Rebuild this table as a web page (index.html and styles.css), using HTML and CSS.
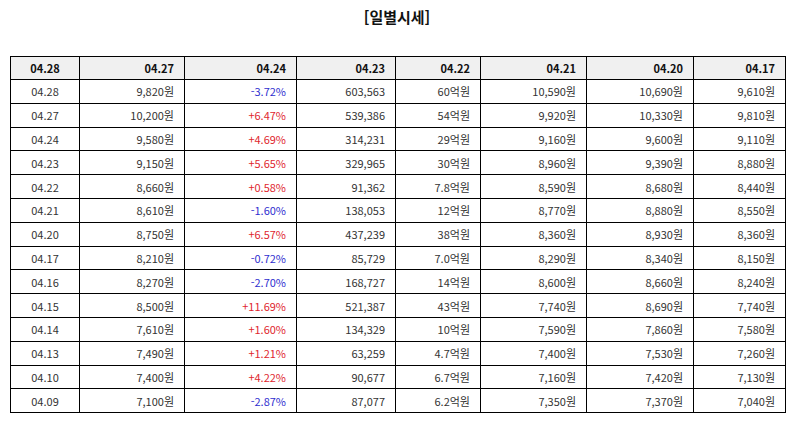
FILE: index.html
```html
<!DOCTYPE html>
<html lang="ko">
<head>
<meta charset="utf-8">
<title>일별시세</title>
<link rel="stylesheet" href="styles.css">
</head>
<body>
<h2 class="title">[일별시세]</h2>
<table class="daily">
<colgroup>
<col class="c1"><col class="c2"><col class="c3"><col class="c4"><col class="c5"><col class="c6"><col class="c7"><col class="c8">
</colgroup>
<thead>
<tr><th class="date">04.28</th><th>04.27</th><th>04.24</th><th>04.23</th><th>04.22</th><th>04.21</th><th>04.20</th><th>04.17</th></tr>
</thead>
<tbody>
<tr><td class="date">04.28</td><td>9,820원</td><td class="down">-3.72%</td><td>603,563</td><td>60억원</td><td>10,590원</td><td>10,690원</td><td>9,610원</td></tr>
<tr><td class="date">04.27</td><td>10,200원</td><td class="up">+6.47%</td><td>539,386</td><td>54억원</td><td>9,920원</td><td>10,330원</td><td>9,810원</td></tr>
<tr><td class="date">04.24</td><td>9,580원</td><td class="up">+4.69%</td><td>314,231</td><td>29억원</td><td>9,160원</td><td>9,600원</td><td>9,110원</td></tr>
<tr><td class="date">04.23</td><td>9,150원</td><td class="up">+5.65%</td><td>329,965</td><td>30억원</td><td>8,960원</td><td>9,390원</td><td>8,880원</td></tr>
<tr><td class="date">04.22</td><td>8,660원</td><td class="up">+0.58%</td><td>91,362</td><td>7.8억원</td><td>8,590원</td><td>8,680원</td><td>8,440원</td></tr>
<tr><td class="date">04.21</td><td>8,610원</td><td class="down">-1.60%</td><td>138,053</td><td>12억원</td><td>8,770원</td><td>8,880원</td><td>8,550원</td></tr>
<tr><td class="date">04.20</td><td>8,750원</td><td class="up">+6.57%</td><td>437,239</td><td>38억원</td><td>8,360원</td><td>8,930원</td><td>8,360원</td></tr>
<tr><td class="date">04.17</td><td>8,210원</td><td class="down">-0.72%</td><td>85,729</td><td>7.0억원</td><td>8,290원</td><td>8,340원</td><td>8,150원</td></tr>
<tr><td class="date">04.16</td><td>8,270원</td><td class="down">-2.70%</td><td>168,727</td><td>14억원</td><td>8,600원</td><td>8,660원</td><td>8,240원</td></tr>
<tr><td class="date">04.15</td><td>8,500원</td><td class="up">+11.69%</td><td>521,387</td><td>43억원</td><td>7,740원</td><td>8,690원</td><td>7,740원</td></tr>
<tr><td class="date">04.14</td><td>7,610원</td><td class="up">+1.60%</td><td>134,329</td><td>10억원</td><td>7,590원</td><td>7,860원</td><td>7,580원</td></tr>
<tr><td class="date">04.13</td><td>7,490원</td><td class="up">+1.21%</td><td>63,259</td><td>4.7억원</td><td>7,400원</td><td>7,530원</td><td>7,260원</td></tr>
<tr><td class="date">04.10</td><td>7,400원</td><td class="up">+4.22%</td><td>90,677</td><td>6.7억원</td><td>7,160원</td><td>7,420원</td><td>7,130원</td></tr>
<tr><td class="date">04.09</td><td>7,100원</td><td class="down">-2.87%</td><td>87,077</td><td>6.2억원</td><td>7,350원</td><td>7,370원</td><td>7,040원</td></tr>
</tbody>
</table>
</body>
</html>
```
FILE: styles.css
```css
html, body {
  margin: 0;
  padding: 0;
  background: #fff;
}
body {
  font-family: "Noto Sans CJK KR", "Noto Sans", sans-serif;
  color: #333;
}
.title {
  margin: 0;
  padding-top: 7px;
  height: 56px;
  box-sizing: border-box;
  text-align: center;
  font-size: 15px;
  line-height: 20px;
  font-weight: bold;
  color: #111;
}
.daily {
  margin-left: 10px;
  width: 776px;
  border-collapse: collapse;
  table-layout: fixed;
  font-size: 11px;
}
.c1 { width: 69px; }
.c2 { width: 105px; }
.c3 { width: 112px; }
.c4 { width: 99px; }
.c5 { width: 85px; }
.c6 { width: 106px; }
.c7 { width: 107px; }
.c8 { width: 92px; }
.daily th,
.daily td {
  border: 1px solid #000;
  height: 22.8px;
  padding: 0 10px 0 0;
  text-align: right;
  line-height: 14px;
  white-space: nowrap;
}
.daily th {
  background: #f0f0f0;
  color: #111;
  font-weight: bold;
  height: 22px;
}
.daily .date {
  text-align: center;
  padding: 0;
}
.daily .up { color: #e0262e; }
.daily .down { color: #2f2fcf; }
```
